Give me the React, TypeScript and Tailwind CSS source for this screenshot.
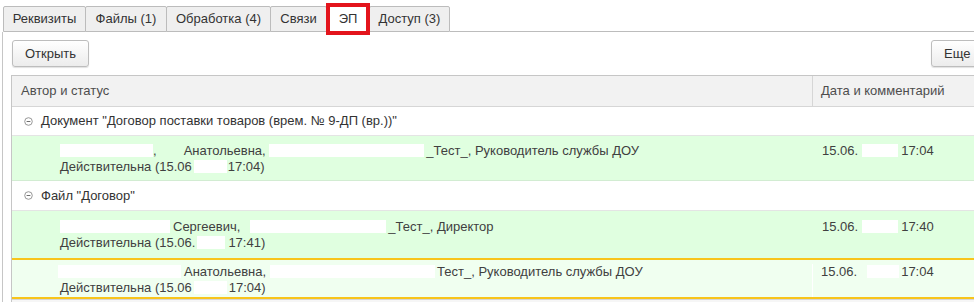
import React from "react";

type Tab = { label: string; width: number; active?: boolean };

const TABS: Tab[] = [
  { label: "Реквизиты", width: 83 },
  { label: "Файлы (1)", width: 82 },
  { label: "Обработка (4)", width: 105 },
  { label: "Связи", width: 57 },
  { label: "ЭП", width: 44, active: true },
  { label: "Доступ (3)", width: 81 },
];

// white patch used where the original data is blanked out
function Blank({ w }: { w: number }) {
  return (
    <span
      className="inline-block h-[13px] bg-white align-[-2px]"
      style={{ width: w }}
    />
  );
}

function Collapse() {
  return (
    <svg width="9" height="9" viewBox="0 0 9 9" className="shrink-0">
      <circle cx="4.5" cy="4.5" r="3.8" fill="none" stroke="#8c8c8c" strokeWidth="0.9" />
      <path d="M2.6 4.5h3.8" stroke="#6e6e6e" strokeWidth="1" />
    </svg>
  );
}

function GroupRow({ title, h }: { title: string; h: string }) {
  return (
    <div className={`flex items-center border-b border-[#e4e4e4] bg-white pl-[12px] ${h}`}>
      <Collapse />
      <span className="ml-[8px] text-[#333]">{title}</span>
    </div>
  );
}

export default function App() {
  return (
    <div className="h-[302px] w-[974px] overflow-hidden bg-white font-['Liberation_Sans',Arial,sans-serif] text-[13px] text-[#404040]">
      <div className="w-[1000px]">
        {/* tabs */}
        <div className="flex h-[32px] items-end pl-[3px]">
          {TABS.map((tab) =>
            tab.active ? (
              <div
                key={tab.label}
                className="relative z-10 -mb-[3px] -ml-px flex h-[32px] items-center justify-center border-4 border-[#e3141c] bg-white text-[#333]"
                style={{ width: tab.width }}
              >
                {tab.label}
              </div>
            ) : (
              <div
                key={tab.label}
                className="-ml-px flex h-[26px] items-center justify-center rounded-t-[2px] border border-[#bcbcbc] bg-[#efefef] text-[#333] first:ml-0"
                style={{ width: tab.width }}
              >
                {tab.label}
              </div>
            )
          )}
          <div className="flex-1 border-b border-[#bcbcbc]" />
        </div>

        {/* panel */}
        <div className="ml-[2px] border-l border-[#c6c6c6] pl-[8px] pr-[9px] pt-[8px]">
          <div className="flex items-start justify-between">
            <button className="ml-px h-[27px] w-[77px] rounded-[3px] border border-[#bdbdbd] bg-gradient-to-b from-white to-[#ececec] text-[13px] text-[#333] shadow-[0_1px_1px_rgba(0,0,0,0.12)]">
              Открыть
            </button>
            <button className="h-[27px] w-[60px] rounded-[3px] border border-[#bdbdbd] bg-gradient-to-b from-white to-[#ececec] pl-[12px] text-left text-[13px] text-[#333] shadow-[0_1px_1px_rgba(0,0,0,0.12)]">
              Еще
            </button>
          </div>

          {/* table */}
          <div className="mt-[8px] border-t border-l border-[#c6c6c6]">
            <div className="flex h-[31px] border-b border-[#d6d6d6] bg-[#f2f2f2] text-[#4d4d4d]">
              <div className="flex w-[801px] items-center border-r border-[#d6d6d6] pl-[9px]">
                Автор и статус
              </div>
              <div className="flex items-center pl-[8px]">Дата и комментарий</div>
            </div>

            <GroupRow
              title={'Документ "Договор поставки товаров (врем. № 9-ДП (вр.))"'}
              h="h-[29px]"
            />

            <div className="flex h-[45px] border-b border-[#d2ecd2] bg-[#e0ffe0] pt-[7px] leading-[16px]">
              <div className="w-[801px] pl-[48px]">
                <div className="whitespace-nowrap">
                  <Blank w={93} />,<span className="inline-block w-[27px]" />
                  Анатольевна, <Blank w={155} />
                  <span className="ml-[2px]">_Тест_, Руководитель службы ДОУ</span>
                </div>
                <div className="whitespace-nowrap">
                  Действительна (15.06<span className="ml-[2px]" />
                  <Blank w={33} />
                  <span className="ml-[1px]">17:04)</span>
                </div>
              </div>
              <div className="whitespace-nowrap pl-[9px]">
                15.06.<span className="ml-[4px]" />
                <Blank w={36} />
                <span className="ml-[3px]">17:04</span>
              </div>
            </div>

            <GroupRow title={'Файл "Договор"'} h="h-[30px]" />

            <div className="flex h-[47px] bg-[#e0ffe0] pt-[8px] leading-[16px]">
              <div className="w-[801px] pl-[48px]">
                <div className="whitespace-nowrap">
                  <Blank w={110} />
                  <span className="ml-[3px]">Сергеевич,</span>
                  <span className="ml-[10px]" />
                  <Blank w={136} />
                  <span className="ml-[2px]">_Тест_, Директор</span>
                </div>
                <div className="whitespace-nowrap">
                  Действительна (15.06.<span className="ml-[2px]" />
                  <Blank w={28} />
                  <span className="ml-[3px]">17:41)</span>
                </div>
              </div>
              <div className="whitespace-nowrap pl-[9px]">
                15.06.<span className="ml-[4px]" />
                <Blank w={36} />
                <span className="ml-[3px]">17:40</span>
              </div>
            </div>

            <div className="flex h-[41px] border-y-2 border-[#f8c41b] bg-[#f0fff0] pt-[4px] leading-[16px]">
              <div className="w-[801px] border-r border-white pl-[46px]">
                <div className="whitespace-nowrap">
                  <Blank w={123} />
                  <span className="ml-[3px]">Анатольевна,</span>
                  <span className="ml-[4px]" />
                  <Blank w={165} />
                  <span className="ml-[2px]">Тест_, Руководитель службы ДОУ</span>
                </div>
                <div className="whitespace-nowrap pl-[2px]">
                  Действительна (15.06<span className="ml-[2px]" />
                  <Blank w={33} />
                  <span className="ml-[2px]">17:04)</span>
                </div>
              </div>
              <div className="whitespace-nowrap pl-[8px]">
                15.06.<span className="ml-[10px]" />
                <Blank w={32} />
                <span className="ml-[2px]">17:04</span>
              </div>
            </div>
            <div className="h-[4px] border-t border-[#d6d6d6] bg-[#f6f6f6]" />
          </div>
        </div>
      </div>
    </div>
  );
}
